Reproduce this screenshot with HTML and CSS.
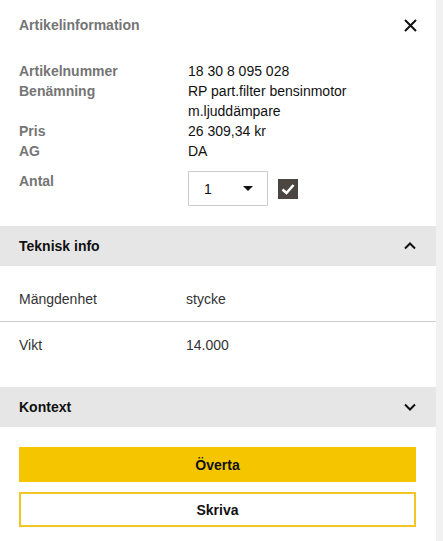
FILE: index.html
```html
<!DOCTYPE html>
<html lang="sv">
<head>
    <meta charset="UTF-8">
    <meta name="viewport" content="width=device-width, initial-scale=1.0">
    <title>Artikelinformation</title>
    <link rel="stylesheet" href="styles.css">
</head>
<body>
    <div class="panel">
        <div class="header">
            <h1 class="title">Artikelinformation</h1>
            <button class="close" aria-label="Stäng">
                <svg width="13" height="13" viewBox="0 0 13 13">
                    <path d="M1 1 L12 12 M12 1 L1 12" stroke="#111" stroke-width="2" fill="none"/>
                </svg>
            </button>
        </div>

        <dl class="info">
            <dt>Artikelnummer</dt>
            <dd>18 30 8 095 028</dd>
            <dt>Benämning</dt>
            <dd>RP part.filter bensinmotor<br>m.ljuddämpare</dd>
            <dt>Pris</dt>
            <dd>26 309,34 kr</dd>
            <dt>AG</dt>
            <dd>DA</dd>
            <dt class="antal-label">Antal</dt>
            <dd class="antal">
                <div class="select">
                    <span>1</span>
                    <span class="caret"></span>
                </div>
                <span class="checkbox">
                    <svg width="20" height="20" viewBox="0 0 20 20">
                        <path d="M4.5 10.5 L8.5 14 L15.5 6" stroke="#fff" stroke-width="2.6" fill="none"/>
                    </svg>
                </span>
            </dd>
        </dl>

        <div class="section-bar">
            <span>Teknisk info</span>
            <svg width="12" height="8" viewBox="0 0 12 8">
                <path d="M1 6.5 L6 1.5 L11 6.5" stroke="#111" stroke-width="2" fill="none"/>
            </svg>
        </div>
        <div class="section-body">
            <div class="row">
                <span>Mängdenhet</span>
                <span>stycke</span>
            </div>
            <div class="row last">
                <span>Vikt</span>
                <span>14.000</span>
            </div>
        </div>

        <div class="section-bar">
            <span>Kontext</span>
            <svg width="12" height="8" viewBox="0 0 12 8">
                <path d="M1 1.5 L6 6.5 L11 1.5" stroke="#111" stroke-width="2" fill="none"/>
            </svg>
        </div>

        <div class="actions">
            <button class="btn primary">Överta</button>
            <button class="btn secondary">Skriva</button>
        </div>
    </div>
</body>
</html>
```

FILE: styles.css
```css
* {
    margin: 0;
    padding: 0;
    box-sizing: border-box;
}

body {
    background: #f1f1f1;
    font-family: 'Liberation Sans', Arial, sans-serif;
    font-size: 14px;
    line-height: 20px;
    color: #222;
}

.panel {
    width: 436px;
    min-height: 541px;
    background: #fff;
}

.header {
    display: flex;
    justify-content: space-between;
    align-items: center;
    padding: 15px 19px 0 19px;
}

.title {
    font-size: 14px;
    line-height: 20px;
    font-weight: bold;
    color: #757575;
}

.close {
    background: none;
    border: none;
    width: 13px;
    height: 13px;
    display: flex;
}

.info {
    display: grid;
    grid-template-columns: 169px 1fr;
    padding: 26px 19px 0 19px;
}

.info dt {
    font-weight: bold;
    color: #757575;
}

.info dd {
    color: #111;
}

.antal-label,
.antal {
    margin-top: 10px;
}

.antal {
    display: flex;
    align-items: center;
    gap: 10px;
}

.select {
    width: 80px;
    height: 35px;
    border: 1px solid #ccc;
    display: flex;
    align-items: center;
    justify-content: space-between;
    padding: 0 14px 0 15px;
}

.caret {
    width: 0;
    height: 0;
    border-left: 5px solid transparent;
    border-right: 5px solid transparent;
    border-top: 5px solid #111;
}

.checkbox {
    width: 20px;
    height: 20px;
    background: #4b4641;
    display: flex;
}

.section-bar {
    display: flex;
    justify-content: space-between;
    align-items: center;
    height: 40px;
    padding: 0 20px 0 19px;
    background: #e6e6e6;
    font-weight: bold;
    color: #111;
    margin-top: 20px;
}

.section-body {
    padding-top: 11px;
}

.row {
    display: grid;
    grid-template-columns: 167px 1fr;
    padding: 12px 19px;
    border-bottom: 1px solid #ccc;
    color: #333;
}

.row.last {
    border-bottom: none;
    padding-top: 13px;
}

.actions {
    display: flex;
    flex-direction: column;
    gap: 10px;
    padding: 20px 20px 0 19px;
}

.btn {
    height: 35px;
    font-family: 'Liberation Sans', Arial, sans-serif;
    font-size: 14px;
    font-weight: bold;
    color: #111;
    border: none;
    cursor: pointer;
}

.primary {
    background: #f5c500;
}

.secondary {
    background: #fff;
    border: 2px solid #f2c624;
}
```
